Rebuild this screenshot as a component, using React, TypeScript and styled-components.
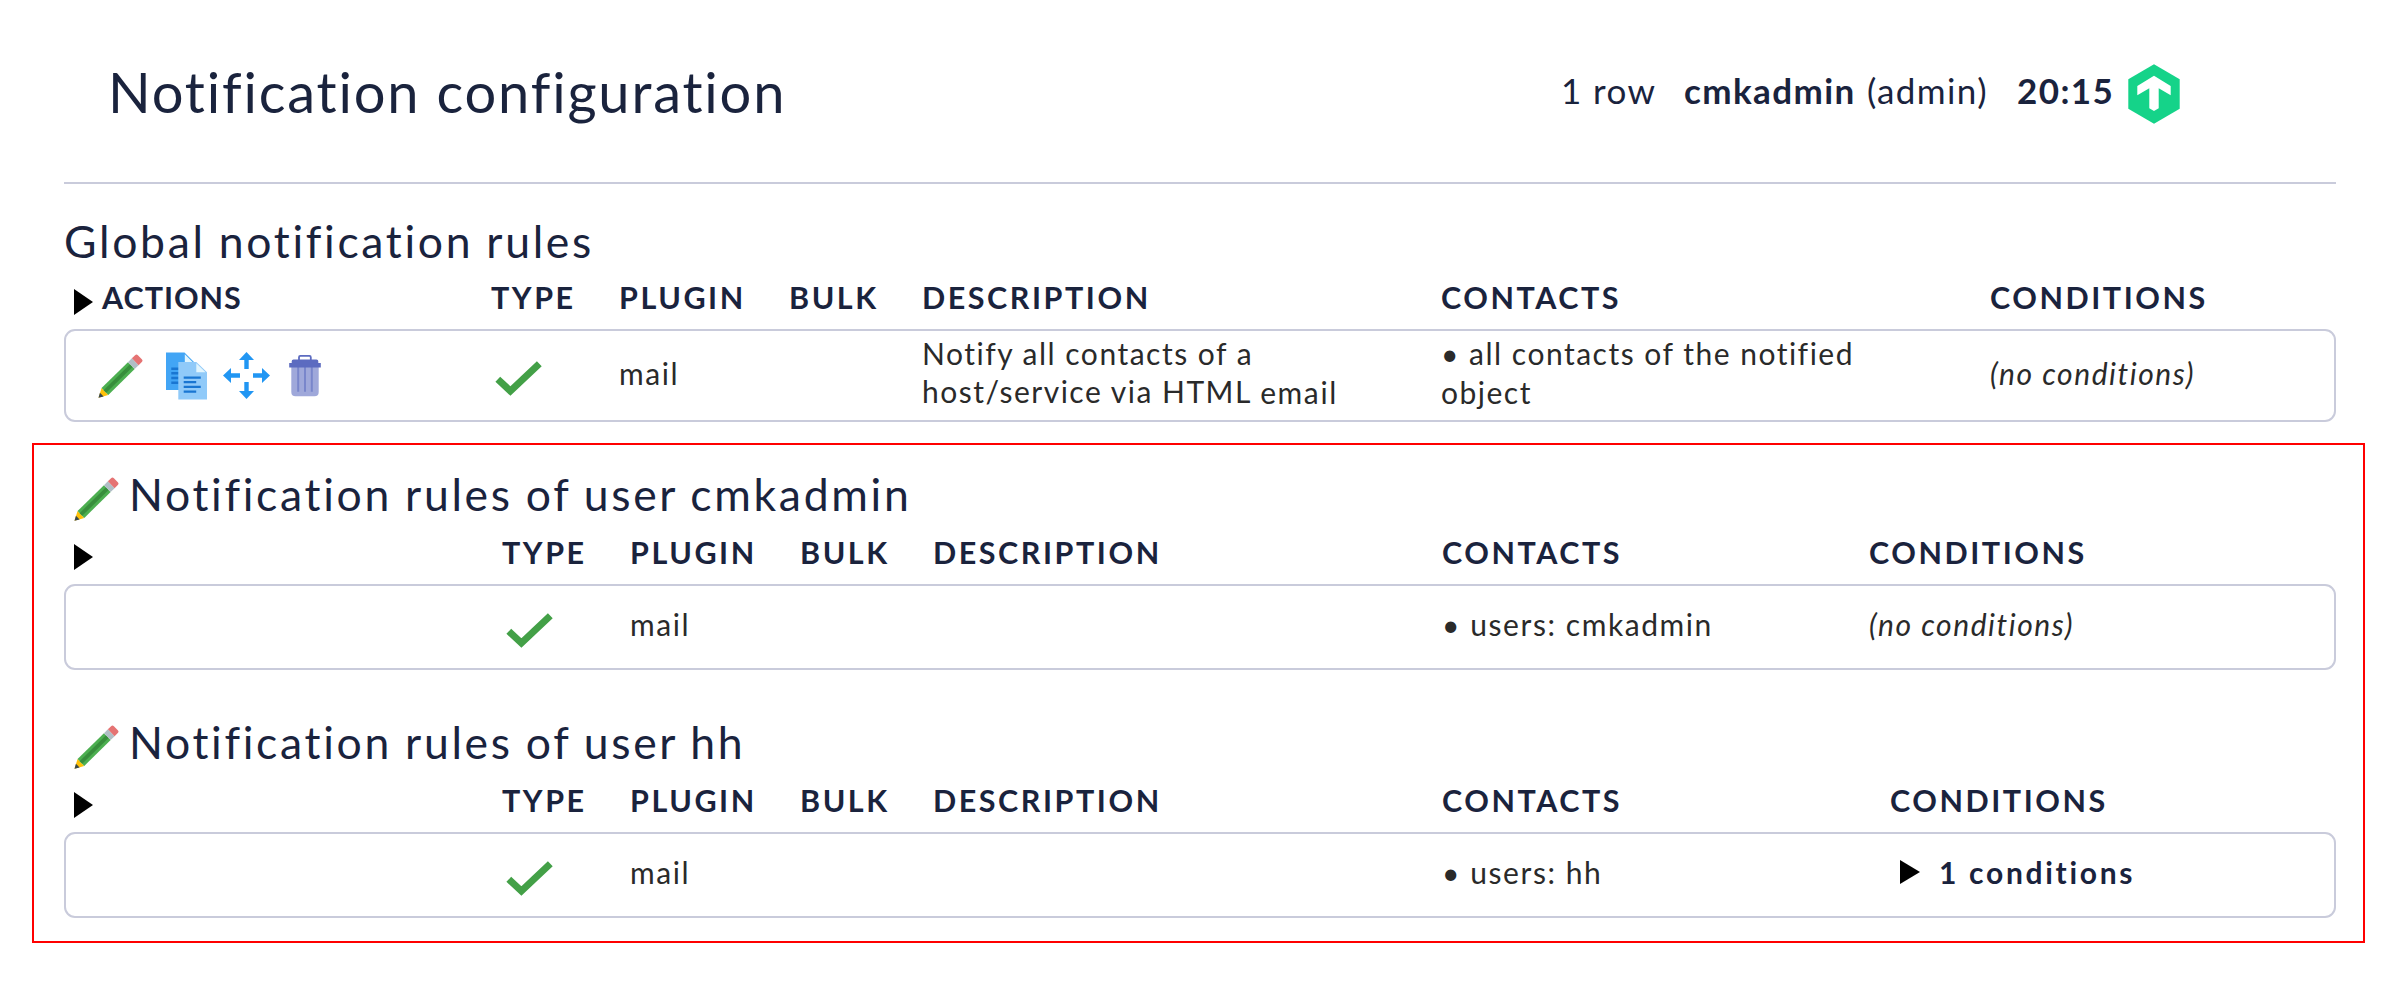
import React from 'react';
import styled, { createGlobalStyle, css } from 'styled-components';

const GlobalStyle = createGlobalStyle`
  * { box-sizing: border-box; }
  body {
    margin: 0;
    background: #fff;
    color: #2a2a2a;
    font-family: Lato, "Liberation Sans", sans-serif;
    font-size: 30px;
    line-height: 36px;
    letter-spacing: 1.57px;
  }
  svg { display: block; flex: none; }
`;

const navy = '#1a233d';
const line = '#c9cbdb';

const PageHeader = styled.header`
  display: flex;
  justify-content: space-between;
  align-items: flex-start;
  height: 184px;
  margin: 0 64px;
  padding: 57px 156px 0 44px;
  border-bottom: 2px solid ${line};
  color: ${navy};
`;

const PageTitle = styled.h1`
  margin: 1px 0 0;
  font-size: 56px;
  line-height: 68px;
  font-weight: 400;
  letter-spacing: 1.82px;
`;

const Status = styled.div`
  display: grid;
  grid-template-columns: 123px 183px 150px 111px 52px;
  margin-top: 7px;
  font-size: 35px;
  line-height: 42px;
  letter-spacing: 1.4px;
  white-space: nowrap;
`;

const StatusItem = styled.span<{ $bold?: boolean }>`
  padding-top: 5px;
  font-weight: ${(p) => (p.$bold ? 700 : 400)};
`;

const GlobalRules = styled.main`
  margin: 30px 64px 21px;
`;

const UserRules = styled.div`
  display: flex;
  flex-direction: column;
  gap: 45px;
  margin: 0 35px 0 32px;
  padding: 22px 27px 23px 30px;
  border: 2px solid #ff0000;
`;

const SectionTitle = styled.h2`
  display: flex;
  align-items: flex-start;
  height: 53px;
  margin: 0;
  color: ${navy};
  font-size: 44.5px;
  line-height: 54px;
  font-weight: 400;
  letter-spacing: 2.68px;
  word-spacing: -1px;
`;

const TitleIcon = styled.span`
  margin: 10px 10px 0 10px;
`;

type Kind = 'global' | 'user' | 'userWide';

const columns: Record<Kind, string> = {
  global: '425px 128px 170px 133px 519px 549px 1fr',
  user: '436px 128px 170px 133px 509px 427px 1fr',
  userWide: '436px 128px 170px 133px 509px 448px 1fr',
};

const rowGrid = css<{ $kind: Kind }>`
  display: grid;
  grid-template-columns: ${(p) => columns[p.$kind]};
`;

const HeadRow = styled.div<{ $kind: Kind }>`
  ${rowGrid}
  height: ${(p) => (p.$kind === 'global' ? 62 : 64)}px;
  padding: ${(p) => (p.$kind === 'global' ? 12 : 14)}px 2px 0;
  color: ${navy};
  font-size: 30.5px;
  font-weight: 700;
  letter-spacing: 2.55px;
`;

const Foldable = styled.div`
  display: flex;
  gap: 9px;
  padding-left: 8px;
  letter-spacing: 0.97px;
  svg { margin-top: 10px; }
`;

const RuleRow = styled.div<{ $kind: Kind }>`
  ${rowGrid}
  height: ${(p) => (p.$kind === 'global' ? 93 : 86)}px;
  border: 2px solid ${line};
  border-radius: 11px;
`;

const Cell = styled.div`
  display: flex;
  align-items: center;
  padding-bottom: 6px;
`;

const IconCell = styled.div`
  display: flex;
  align-items: center;
  padding: 6px 0 0 4px;
`;

const Actions = styled.div`
  display: grid;
  grid-template-columns: 68px 57px 66px 32px;
  align-items: center;
  padding-left: 32px;
`;

const TextCell = styled.div<{ $leading: number }>`
  padding-top: 3px;
  line-height: ${(p) => p.$leading}px;
  letter-spacing: 1.5px;
`;

const Lowered = styled.span`
  display: inline-block;
  line-height: 36px;
  vertical-align: -1px;
  letter-spacing: 1.6px;
`;

const Italic = styled.em`
  letter-spacing: 1.55px;
`;

const ConditionToggle = styled.div`
  display: flex;
  align-items: center;
  gap: 19px;
  padding: 0 0 6px 10px;
  color: ${navy};
  font-weight: 700;
  letter-spacing: 2.7px;
`;

const Triangle = ({ w = 19, h = 26 }: { w?: number; h?: number }) => (
  <svg width={w} height={h} viewBox="0 0 19 26" preserveAspectRatio="none">
    <path d="M0 0L19 13L0 26z" fill="#000" />
  </svg>
);

const Check = () => (
  <svg width="47" height="35" viewBox="0 0 47 35">
    <path d="M2.8 18.3L15.4 30L44.3 2.7" fill="none" stroke="#43a047" strokeWidth="7" />
  </svg>
);

const Pencil = () => (
  <svg width="45" height="44" viewBox="0 0 45 44">
    <g transform="translate(0.5 43.8) rotate(-44.5)">
      <path d="M0 0L9 -4.8V4.8z" fill="#ffc107" />
      <path d="M0 0L4.6 -2.6V2.6z" fill="#37474f" />
      <rect x="9" y="-4.8" width="37" height="9.6" fill="#4caf50" />
      <rect x="9" y="-1.9" width="37" height="3.8" fill="#388e3c" />
      <rect x="46" y="-4.8" width="5.5" height="9.6" fill="#b0bec5" />
      <path d="M51.5 -4.8H56Q58 -4.8 58 -2.8V2.8Q58 4.8 56 4.8H51.5z" fill="#e57373" />
    </g>
  </svg>
);

const Copy = () => (
  <svg width="41" height="48" viewBox="0 0 41 48">
    <path d="M0 .5H18.5L28 10V38H0z" fill="#42a5f5" />
    <path d="M18.8 2.2V10H26.6z" fill="#e1f5fe" />
    <path d="M5.3 16.7H13M5.3 21.3H13M5.3 26H13M5.3 30.7H13" stroke="#1976d2" strokeWidth="2.4" />
    <path d="M12.3 10H30.3L41 20.3V47.5H12.3z" fill="#90caf9" />
    <path d="M30.3 11.3V20.3H39.6z" fill="#e1f5fe" />
    <path d="M17.7 25.7H34.8M17.7 30.2H30.2M17.7 34.9H34.8M17.7 39.6H30.2" stroke="#1976d2" strokeWidth="2.3" />
  </svg>
);

const Move = () => (
  <svg width="47" height="47" viewBox="0 0 47 47" fill="#2196f3">
    {[0, 90, 180, 270].map((a) => (
      <path key={a} transform={`rotate(${a} 23.5 23.5)`} d="M23.5 0L31 8H25.7V17H21.3V8H16z" />
    ))}
  </svg>
);

const Trash = () => (
  <svg width="32" height="42" viewBox="0 0 32 42">
    <path d="M2.3 12H29.7V37Q29.7 41.3 25.5 41.3H6.5Q2.3 41.3 2.3 37z" fill="#9fa8da" />
    <path d="M9.2 12V36.7M16 12V36.7M22.8 12V36.7" stroke="#7986cb" strokeWidth="2" />
    <path d="M10 5.5V2.2Q10 .9 11.3 .9H20.5Q21.8 .9 21.8 2.2V5.5" fill="none" stroke="#5c6bc0" strokeWidth="1.8" />
    <path d="M4.5 4.4H27.5Q29.3 4.4 29.3 6.2V8H31.8V12.5H.2V8H2.7V6.2Q2.7 4.4 4.5 4.4z" fill="#5c6bc0" />
  </svg>
);

const Logo = () => (
  <svg width="52" height="60" viewBox="0 0 52 60">
    <path d="M26 .3L51.7 15.2V44.8L26 59.7L.3 44.8V15.2z" fill="#15d389" />
    <path
      d="M26 11.7L42.7 22V31.3L30.7 24.3V44.3L26 47L21.3 44.3V24.3L9.3 31.3V22z"
      fill="#fff"
    />
  </svg>
);

const Heads = () => (
  <>
    <span>TYPE</span>
    <span>PLUGIN</span>
    <span>BULK</span>
    <span>DESCRIPTION</span>
    <span>CONTACTS</span>
    <span>CONDITIONS</span>
  </>
);

interface UserSectionProps {
  user: string;
  kind: Kind;
  children: React.ReactNode;
}

const UserSection = ({ user, kind, children }: UserSectionProps) => (
  <section>
    <SectionTitle>
      <TitleIcon><Pencil /></TitleIcon>
      Notification rules of user {user}
    </SectionTitle>
    <HeadRow $kind={kind}>
      <Foldable><Triangle /></Foldable>
      <Heads />
    </HeadRow>
    <RuleRow $kind={kind}>
      <Cell />
      <IconCell><Check /></IconCell>
      <Cell>mail</Cell>
      <Cell />
      <Cell />
      <Cell>• users: {user}</Cell>
      {children}
    </RuleRow>
  </section>
);

export default function App() {
  return (
    <>
      <GlobalStyle />
      <PageHeader>
        <PageTitle>Notification configuration</PageTitle>
        <Status>
          <StatusItem>1 row</StatusItem>
          <StatusItem $bold>cmkadmin</StatusItem>
          <StatusItem>(admin)</StatusItem>
          <StatusItem $bold>20:15</StatusItem>
          <Logo />
        </Status>
      </PageHeader>
      <GlobalRules>
        <SectionTitle>Global notification rules</SectionTitle>
        <HeadRow $kind="global">
          <Foldable><Triangle />ACTIONS</Foldable>
          <Heads />
        </HeadRow>
        <RuleRow $kind="global">
          <Actions>
            <Pencil />
            <Copy />
            <Move />
            <Trash />
          </Actions>
          <IconCell><Check /></IconCell>
          <Cell>mail</Cell>
          <Cell />
          <TextCell $leading={38}>
            Notify all contacts of a<br />
            host/service via HTML <Lowered>email</Lowered>
          </TextCell>
          <TextCell $leading={39}>
            • all contacts of the notified<br />
            object
          </TextCell>
          <Cell><Italic>(no conditions)</Italic></Cell>
        </RuleRow>
      </GlobalRules>
      <UserRules>
        <UserSection user="cmkadmin" kind="user">
          <Cell><Italic>(no conditions)</Italic></Cell>
        </UserSection>
        <UserSection user="hh" kind="userWide">
          <ConditionToggle>
            <Triangle w={20} h={24} />
            1 conditions
          </ConditionToggle>
        </UserSection>
      </UserRules>
    </>
  );
}
